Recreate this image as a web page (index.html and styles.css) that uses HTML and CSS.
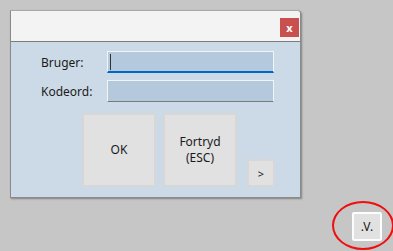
FILE: index.html
```html
<!DOCTYPE html>
<html lang="da">
<head>
  <meta charset="UTF-8" />
  <meta name="viewport" content="width=device-width, initial-scale=1.0" />
  <title>Login</title>
  <link rel="stylesheet" href="styles.css">
</head>
<body>
  <div class="window">
    <div class="titlebar">
      <button class="close">x</button>
    </div>
    <div class="client">
      <div class="form">
        <label for="user">Bruger:</label>
        <div class="input active"><span class="caret"></span></div>
        <label for="pass">Kodeord:</label>
        <div class="input"></div>
      </div>
      <div class="actions">
        <button class="big">OK</button>
        <button class="big">Fortryd<br>(ESC)</button>
        <button class="small">&gt;</button>
      </div>
    </div>
  </div>

  <div class="footer">
    <div class="marked">
      <button class="version">.V.</button>
      <div class="ring"></div>
    </div>
  </div>
</body>
</html>
```

FILE: styles.css
```css
body {
  margin: 0;
  padding: 10px 0 0 10px;
  width: 393px;
  height: 251px;
  box-sizing: border-box;
  background: #c6c6c6;
  font-family: "Noto Sans", "Open Sans", sans-serif;
  font-size: 12px;
  color: #1a1a1a;
  overflow: hidden;
}
button {
  font-family: inherit;
  font-size: 12px;
  color: #1a1a1a;
  padding: 0;
  cursor: pointer;
}
.window {
  width: 289px;
  height: 186px;
  border: 1px solid #8a8a8a;
  border-top-color: #a8a8a8;
  border-radius: 0 4px 0 0;
  box-shadow: 1px 1px 2px rgba(0, 0, 0, 0.35);
  display: flex;
  flex-direction: column;
}
.titlebar {
  height: 31px;
  background: #f3f3f3;
  border-bottom: 1px solid #7c7c7c;
  border-radius: 0 3px 0 0;
  display: flex;
  justify-content: flex-end;
  padding: 7px 1px 0 0;
  box-sizing: border-box;
}
.close {
  width: 19px;
  height: 19px;
  background: #c85150;
  border: none;
  color: #fff;
  font-weight: bold;
  font-size: 11px;
  line-height: 17px;
}
.client {
  flex: 1;
  background: #ccdae7;
  padding: 9px 0 0 30px;
}
.form {
  display: grid;
  grid-template-columns: 66px 167px;
  row-gap: 7px;
  align-items: center;
}
label {
  font-size: 12px;
}
.input {
  height: 22px;
  box-sizing: border-box;
  background: #b4c9db;
  border: 1px solid #f2f5f8;
  border-bottom: 1px solid #7a7a7a;
  position: relative;
}
.input.active {
  border-bottom: 2px solid #0066c8;
}
.caret {
  position: absolute;
  left: 2px;
  top: 2px;
  width: 1px;
  height: 16px;
  background: #333;
}
.actions {
  display: flex;
  align-items: flex-end;
  margin: 11px 0 0 41px;
}
.big {
  width: 74px;
  height: 74px;
  background: #e1e1e1;
  border: 2px solid #d7d7d7;
  margin-right: 7px;
  line-height: 16px;
}
.small {
  width: 28px;
  height: 28px;
  background: #e1e1e1;
  border: 2px solid #d7d7d7;
  margin-left: 3px;
  font-size: 11px;
}
.footer {
  display: flex;
  justify-content: flex-end;
  padding: 14px 11px 0 0;
}
.marked {
  position: relative;
}
.version {
  width: 30px;
  height: 29px;
  background: #e1e1e1;
  border: 2px solid #fdfdfd;
  border-radius: 2px;
}
.ring {
  position: absolute;
  left: -20px;
  top: -11px;
  width: 58px;
  height: 45px;
  border: 2px solid #ee1010;
  border-radius: 50%;
}
```
